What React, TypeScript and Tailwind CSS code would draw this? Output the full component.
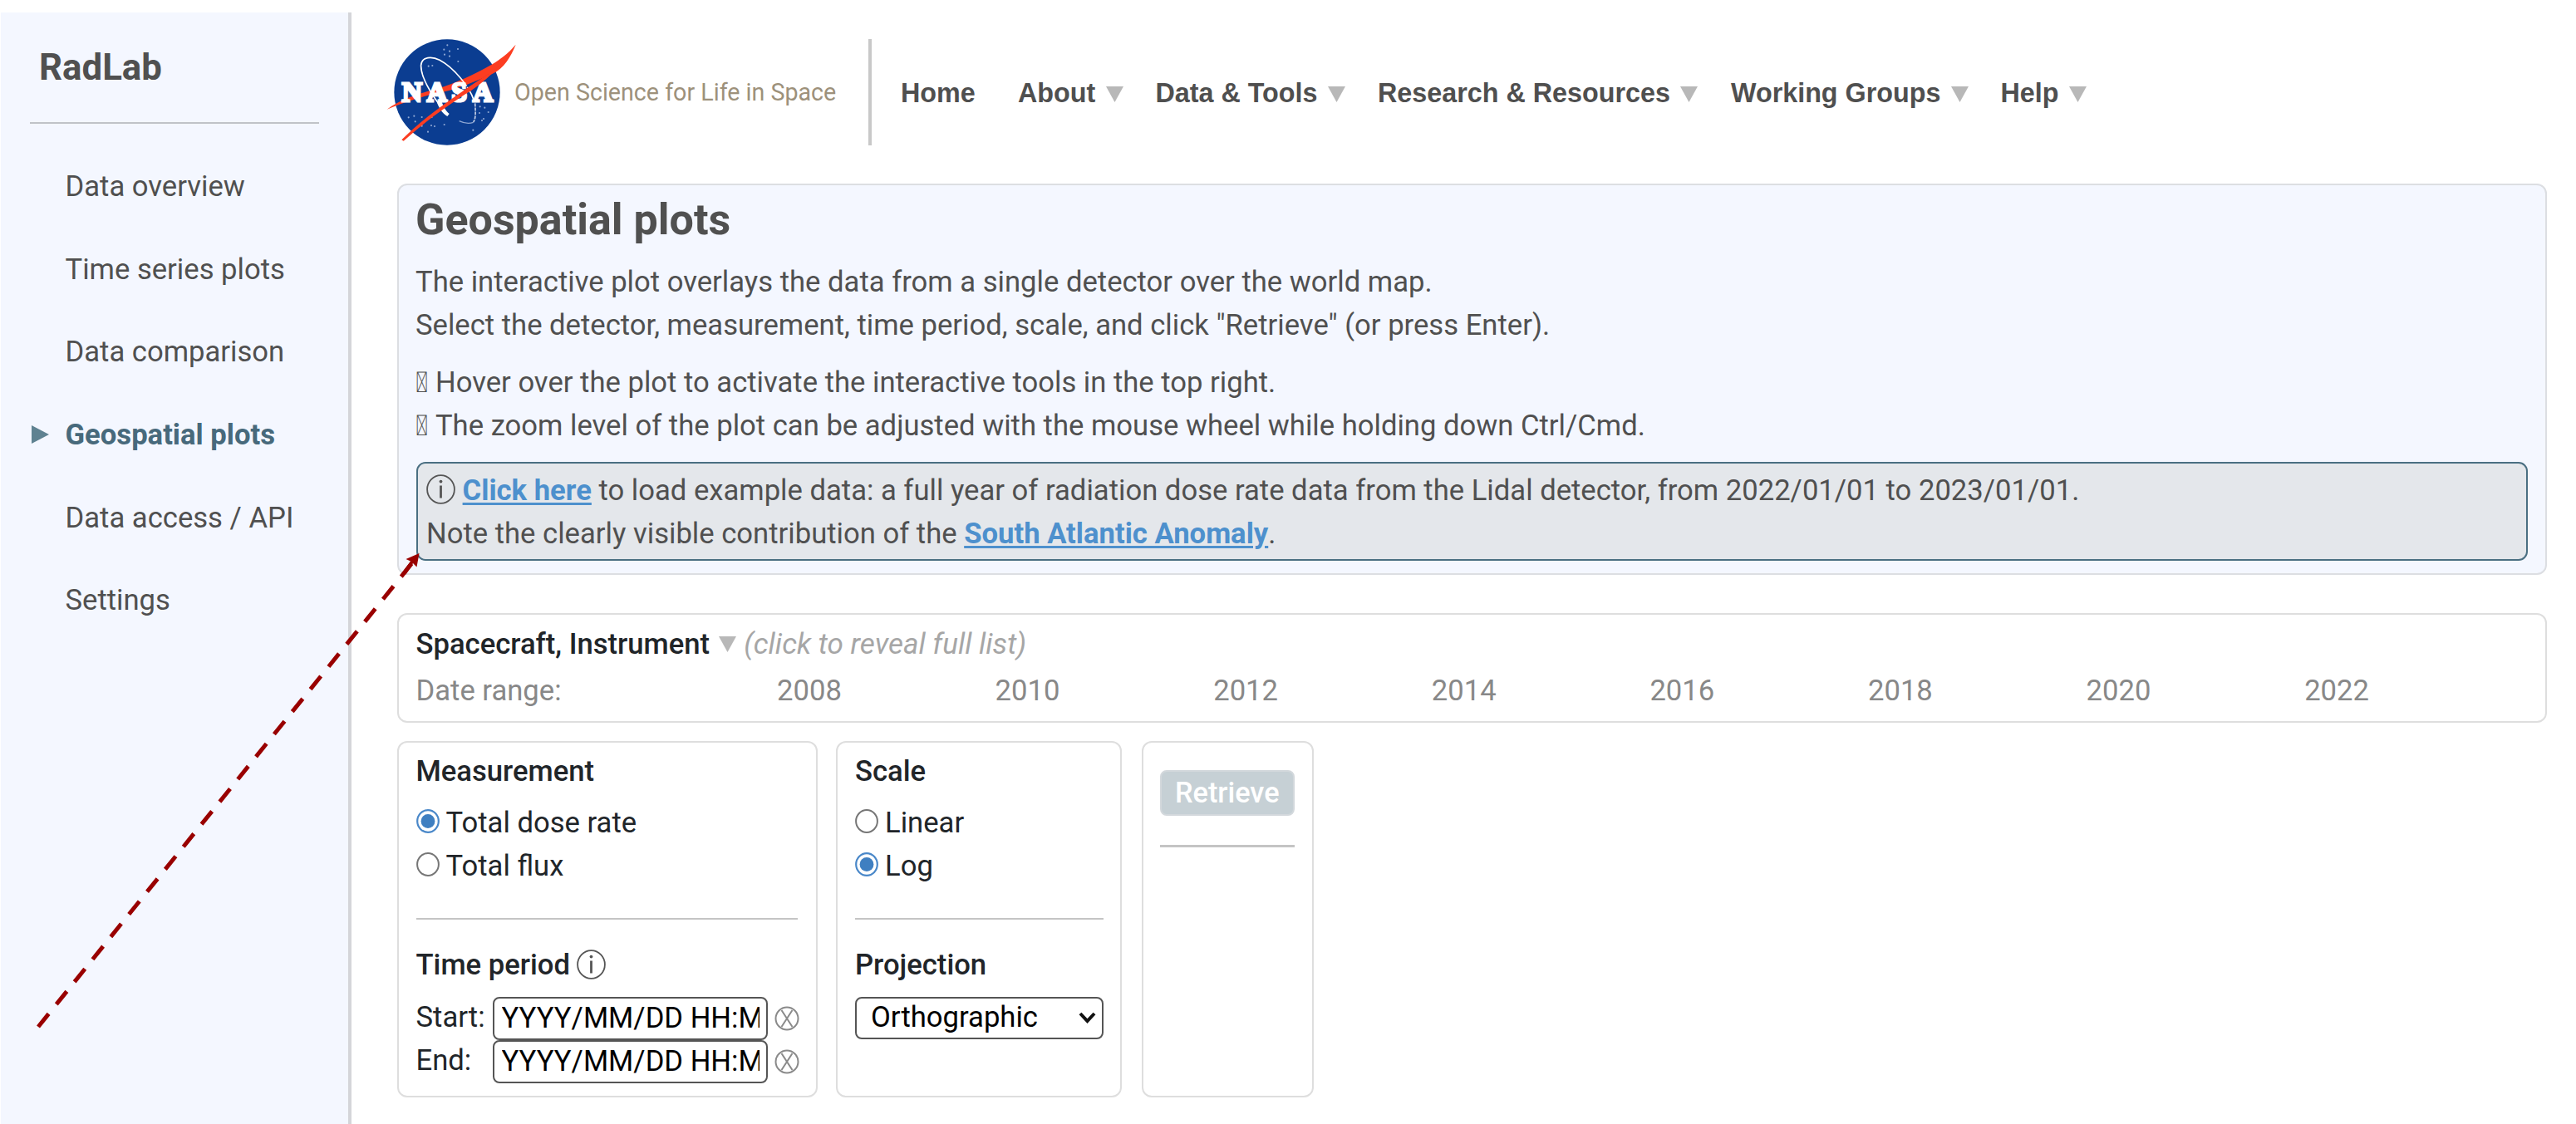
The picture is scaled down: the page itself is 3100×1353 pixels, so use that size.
import type { ReactNode } from "react";

const menu = [
  { label: "Data overview" },
  { label: "Time series plots" },
  { label: "Data comparison" },
  { label: "Geospatial plots", active: true },
  { label: "Data access / API" },
  { label: "Settings" },
];

const nav = [
  { label: "Home", width: "w-[141px]", arrow: false },
  { label: "About", width: "w-[165.5px]", arrow: true },
  { label: "Data & Tools", width: "w-[267.5px]", arrow: true },
  { label: "Research & Resources", width: "w-[425px]", arrow: true },
  { label: "Working Groups", width: "w-[324.5px]", arrow: true },
  { label: "Help", width: "w-[120px]", arrow: true },
];

const years = [2008, 2010, 2012, 2014, 2016, 2018, 2020, 2022];

function DownTriangle({ className = "" }: { className?: string }) {
  return (
    <svg className={`h-[19px] w-[21px] shrink-0 ${className}`} viewBox="0 0 21 19">
      <path d="M0 0H21L10.5 19Z" fill="#b8b8b8" />
    </svg>
  );
}

function InfoIcon({ className = "" }: { className?: string }) {
  return (
    <svg className={`h-[36px] w-[35px] ${className}`} viewBox="0 0 35 36" fill="none">
      <ellipse cx="17.5" cy="18" rx="16.4" ry="16.9" stroke="#555" strokeWidth="1.8" />
      <path d="M17.5 13.5V28.5" stroke="#555" strokeWidth="2.8" />
      <circle cx="17.5" cy="8.6" r="1.9" fill="#555" />
    </svg>
  );
}

function ClearIcon() {
  return (
    <svg className="h-[30px] w-[30px]" viewBox="0 0 30 30" fill="none" stroke="#8a8a8a" strokeWidth="2">
      <circle cx="15" cy="15" r="13.5" />
      <path d="M8.5 5L21.5 25M21.5 5L8.5 25" />
    </svg>
  );
}

function Radio({ label, checked }: { label: string; checked?: boolean }) {
  return (
    <label className="flex h-[51.8px] items-center">
      <svg className="mb-[5px] h-[29px] w-[28px]" viewBox="0 0 28 29" fill="none">
        {checked ? (
          <>
            <ellipse cx="14" cy="14.5" rx="12.8" ry="13.3" stroke="#4a88c9" strokeWidth="2.2" fill="#fff" />
            <circle cx="14" cy="14.5" r="8.4" fill="#3f7fc1" />
          </>
        ) : (
          <ellipse cx="14" cy="14.5" rx="12.9" ry="13.4" stroke="#767676" strokeWidth="2" fill="#fff" />
        )}
      </svg>
      <span className="ml-[8px]">{label}</span>
    </label>
  );
}

function Logo() {
  const stars = [
    [250, 58], [238, 74], [258, 80], [288, 72], [240, 92], [258, 98], [289, 117], [182, 134], [196, 132],
    [110, 319], [130, 314], [134, 334], [158, 318], [194, 318], [192, 348], [158, 350], [180, 371], [239, 345],
    [368, 280], [385, 284], [398, 300], [366, 303], [381, 324], [375, 330], [343, 365], [204, 351],
  ];
  return (
    <svg className="h-[128px] w-[157px] shrink-0 overflow-visible" viewBox="33 36 471 384">
      <circle cx="249" cy="228" r="191" fill="#0b3d91" />
      {stars.map(([x, y]) => (
        <circle key={`${x}-${y}`} cx={x} cy={y} r="3.2" fill="#8fa8d4" />
      ))}
      <path
        d="M32 290C100 243 170 228 222 213C280 194 345 165 410 128C440 110 470 88 497 56C480 98 455 142 412 162C350 190 290 214 240 226C175 238 100 262 32 290Z"
        fill="#fc3d21"
      />
      <path
        d="M235 290C190 235 153 170 155 130C158 98 195 98 222 112C275 140 330 210 345 255"
        fill="none"
        stroke="#fff"
        strokeWidth="5"
      />
      <path d="M350 268C352 300 353 325 344 336" fill="none" stroke="#c5d0e6" strokeWidth="5" strokeDasharray="12 3" />
      <path d="M344 337C330 342 310 340 293 332" fill="none" stroke="#8fa8d4" strokeWidth="4" />
      <text
        x="86 176 265 342"
        y="262"
        fill="#fff"
        stroke="#fff"
        strokeWidth="9"
        className="font-['Liberation_Serif',serif] text-[101px] font-bold"
      >
        NASA
      </text>
      <path d="M212 262L228 256C234 280 246 298 257 306L250 315C232 304 218 284 212 262Z" fill="#fff" />
      <path d="M318 209C345 199 375 182 400 164" fill="none" stroke="#0b3d91" strokeWidth="4" />
      <path
        d="M85 400C170 316 250 263 310 221C345 196 370 180 404 158L436 134C398 178 350 214 320 232C250 277 160 342 92 404Z"
        fill="#fc3d21"
      />
    </svg>
  );
}

function Card({ className, children }: { className: string; children: ReactNode }) {
  return (
    <section className={`h-[428.5px] rounded-[12px] border-[2px] border-[#dedede] bg-white ${className}`}>
      {children}
    </section>
  );
}

function DateField({ label }: { label: string }) {
  return (
    <div className="flex h-[52px] items-center">
      <span className="mb-[1px] w-[92px]">{label}</span>
      <input
        readOnly
        value="YYYY/MM/DD HH:MM"
        className="h-[52px] w-[331px] rounded-[8px] border-[2px] border-[#555] bg-white pr-[8px] pb-[2px] pl-[9px] text-black outline-none"
      />
      <span className="ml-[8px] flex">
        <ClearIcon />
      </span>
    </div>
  );
}

export default function App() {
  return (
    <div className="relative flex h-[1353px] w-[3100px] overflow-hidden bg-white font-[Roboto,sans-serif] text-[34.63px] leading-[51.8px] text-[#212529]">
      <aside className="mt-[15px] ml-px w-[422px] shrink-0 border-r-[4px] border-[#d4d5d9] bg-[#f4f7ff] text-[#505050]">
        <h2 className="mt-[36px] ml-[46px] text-[43.8px] leading-[60px] font-bold">RadLab</h2>
        <div className="mt-[36px] ml-[35px] h-[2px] w-[348px] bg-[#c0c3c8]" />
        <nav className="mt-[26px]">
          {menu.map((m) => (
            <a key={m.label} className="flex h-[99.7px] items-center">
              <span className="w-[77.5px] shrink-0 pl-[36.5px]">
                {m.active && (
                  <svg className="-mt-[2px] h-[22px] w-[21px]" viewBox="0 0 21 22">
                    <path d="M0 0L21 11L0 22Z" fill="#5f8291" />
                  </svg>
                )}
              </span>
              <span className={m.active ? "font-bold text-[#47697b]" : ""}>{m.label}</span>
            </a>
          ))}
        </nav>
      </aside>

      <main className="flex-1 pl-[55px]">
        <header className="mt-[47px] -ml-[12.5px] flex h-[128px] items-center">
          <Logo />
          <span className="-ml-[3.5px] w-[426px] pt-[2px] text-[28.65px] whitespace-nowrap text-[#9d917b]">
            Open Science for Life in Space
          </span>
          <div className="h-full w-[4px] bg-[#c8c8c8]" />
          <nav className="ml-[35px] flex pt-[3px] font-['Liberation_Sans',sans-serif] text-[32.3px] font-bold text-[#4f4f4f]">
            {nav.map((n) => (
              <a key={n.label} className={`flex shrink-0 items-center whitespace-nowrap ${n.width}`}>
                {n.label}
                {n.arrow && <DownTriangle className="mt-[2px] ml-[12.5px]" />}
              </a>
            ))}
          </nav>
        </header>

        <section className="mt-[46px] h-[471px] w-[2587px] rounded-[12px] border-[2px] border-[#dcdee2] bg-[#f4f7ff] px-[21px] pt-[7px] text-[#505050]">
          <h1 className="-ml-px text-[52px] leading-[70px] font-bold">Geospatial plots</h1>
          <p className="mt-[14px] -ml-px">
            The interactive plot overlays the data from a single detector over the world map.
            <br />
            Select the detector, measurement, time period, scale, and click "Retrieve" (or press Enter).
          </p>
          <p className="mt-[17.5px] -ml-px">
            {"\uF0A4"} Hover over the plot to activate the interactive tools in the top right.
            <br />
            {"\uF0A4"} The zoom level of the plot can be adjusted with the mouse wheel while holding down Ctrl/Cmd.
          </p>
          <div className="mt-[17.5px] h-[119px] rounded-[11px] border-[2px] border-[#4a6f82] bg-[#e4e7eb] pt-[7px] pl-[10px]">
            <div className="h-[51.8px]">
              <InfoIcon className="-mt-[8px] inline-block" />{" "}
              <a className="font-bold text-[#4d90cd] underline decoration-[2.5px] underline-offset-[3px]">Click here</a> to
              load example data: a full year of radiation dose rate data from the Lidal detector, from 2022/01/01 to
              2023/01/01.
            </div>
            <div>
              Note the clearly visible contribution of the{" "}
              <a className="font-bold text-[#4d90cd] underline decoration-[2.5px] underline-offset-[3px]">
                South Atlantic Anomaly
              </a>
              .
            </div>
          </div>
        </section>

        <section className="mt-[46px] h-[132px] w-[2587px] rounded-[12px] border-[2px] border-[#dedede] pt-[6.5px] pl-[20.5px] leading-[56.3px]">
          <div className="flex items-center">
            <span className="font-medium">Spacecraft, Instrument</span>
            <DownTriangle className="mt-[2px] ml-[11px]" />
            <span className="ml-[9px] text-[35.1px] text-[#a6a6a6] italic">(click to reveal full list)</span>
          </div>
          <div className="flex text-[#888]">
            <span className="w-[434.5px]">Date range:</span>
            {years.map((y) => (
              <span key={y} className="w-[262.6px]">
                {y}
              </span>
            ))}
          </div>
        </section>

        <div className="mt-[22px] flex">
          <Card className="w-[506px] pt-[8.5px] pl-[20.5px]">
            <h3 className="font-medium">Measurement</h3>
            <div className="mt-[11px]">
              <Radio label="Total dose rate" checked />
              <Radio label="Total flux" />
            </div>
            <div className="mt-[36px] h-[2px] w-[459px] bg-[#c4c4c4]" />
            <h3 className="mt-[29px] flex items-center font-medium">
              Time period <InfoIcon className="-mt-[1px] ml-[8px]" />
            </h3>
            <div className="mt-[12px]">
              <DateField label="Start:" />
              <DateField label="End:" />
            </div>
          </Card>

          <Card className="ml-[22px] w-[344px] pt-[8.5px] pl-[21px]">
            <h3 className="font-medium">Scale</h3>
            <div className="mt-[11px]">
              <Radio label="Linear" />
              <Radio label="Log" checked />
            </div>
            <div className="mt-[36px] h-[2px] w-[299px] bg-[#c4c4c4]" />
            <h3 className="mt-[29px] font-medium">Projection</h3>
            <div className="mt-[12px] flex h-[51px] w-[299px] items-center justify-between rounded-[8px] border-[2px] border-[#555] pr-[7px] pl-[17px] text-black">
              <span className="-mt-[1px]">Orthographic</span>
              <svg className="-mt-[1px] h-[14px] w-[21px]" viewBox="0 0 21 14" fill="none">
                <path d="M2 2L10.5 11L19 2" stroke="#111" strokeWidth="4" />
              </svg>
            </div>
          </Card>

          <Card className="ml-[24px] w-[207px] pt-[33px] pl-[20px]">
            <button className="flex h-[55px] w-[161.5px] items-center justify-center rounded-[8px] border-[2px] border-[#d3d8dc] bg-[#c6d0d5] text-[34.3px] font-medium text-white">
              Retrieve
            </button>
            <div className="mt-[35px] h-[3px] w-[162px] bg-[#c4c4c4]" />
          </Card>
        </div>
      </main>

      <svg className="pointer-events-none absolute inset-0 h-full w-full" viewBox="0 0 3100 1353">
        <path d="M46 1236L499 674" stroke="#990000" strokeWidth="5" strokeDasharray="20 14.8" fill="none" />
        <path d="M504.5 666L488.5 673L494 675.5L484 689L488.5 691.5L497 678L501.5 682.5Z" fill="#990000" />
      </svg>
    </div>
  );
}
